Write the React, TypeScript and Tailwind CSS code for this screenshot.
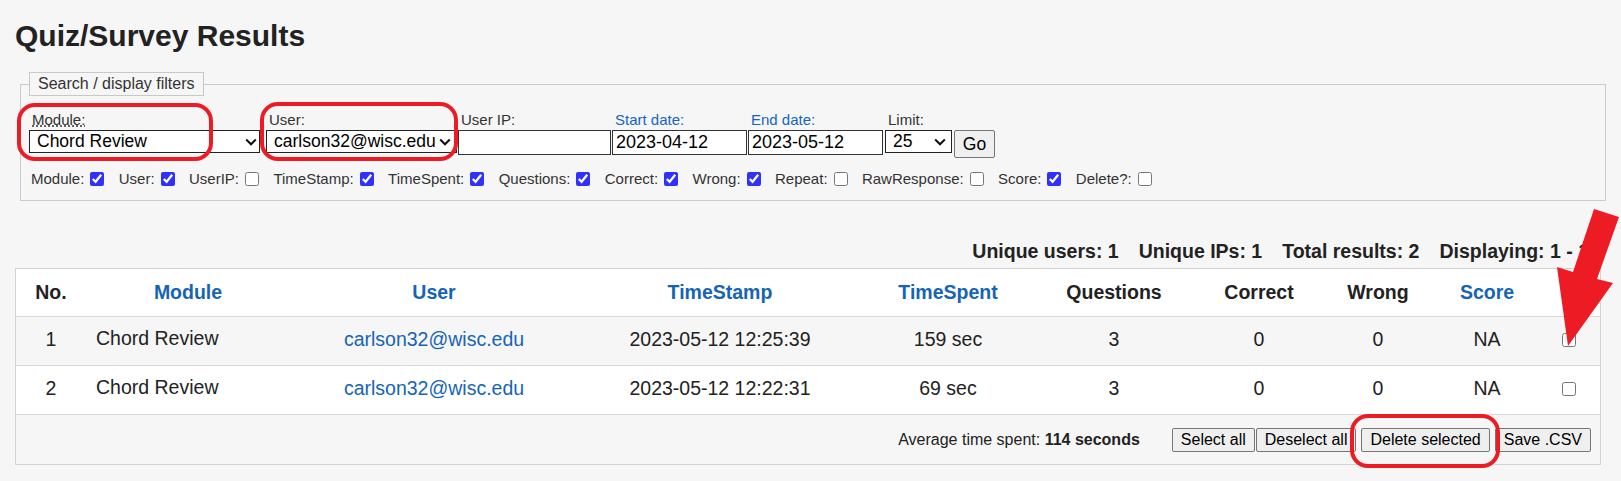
import React from "react";

const red = "#ed1c24";
const blue = "text-[#1565b4]";
const cols =
  "grid grid-cols-[70px_204px_288px_284px_172px_160px_130px_108px_110px_58px]";

const toggles: [string, boolean][] = [
  ["Module", true],
  ["User", true],
  ["UserIP", false],
  ["TimeStamp", true],
  ["TimeSpent", true],
  ["Questions", true],
  ["Correct", true],
  ["Wrong", true],
  ["Repeat", false],
  ["RawResponse", false],
  ["Score", true],
  ["Delete?", false],
];

const headers = [
  { label: "No.", link: false },
  { label: "Module", link: true },
  { label: "User", link: true },
  { label: "TimeStamp", link: true },
  { label: "TimeSpent", link: true },
  { label: "Questions", link: false },
  { label: "Correct", link: false },
  { label: "Wrong", link: false },
  { label: "Score", link: true },
  { label: "", link: false },
];

const results = [
  {
    no: 1,
    module: "Chord Review",
    user: "carlson32@wisc.edu",
    stamp: "2023-05-12 12:25:39",
    spent: "159 sec",
    questions: 3,
    correct: 0,
    wrong: 0,
    score: "NA",
  },
  {
    no: 2,
    module: "Chord Review",
    user: "carlson32@wisc.edu",
    stamp: "2023-05-12 12:22:31",
    spent: "69 sec",
    questions: 3,
    correct: 0,
    wrong: 0,
    score: "NA",
  },
];

function Chevron({ className }: { className: string }) {
  return (
    <svg
      className={`pointer-events-none absolute top-[8px] ${className}`}
      width="12"
      height="8"
      viewBox="0 0 12 8"
      fill="none"
    >
      <path d="M1.2 1.5l4.8 4.8 4.8-4.8" stroke="#111" strokeWidth="2" />
    </svg>
  );
}

function Select({
  value,
  width,
  chevron,
}: {
  value: string;
  width: string;
  chevron: string;
}) {
  return (
    <div className={`relative ${width}`}>
      <select
        defaultValue={value}
        className="h-[23px] w-full appearance-none border border-[#222] bg-white pl-[7px] text-[17.5px] leading-[21px] text-black outline-none"
      >
        <option>{value}</option>
      </select>
      <Chevron className={chevron} />
    </div>
  );
}

function Field({
  label,
  className,
  children,
}: {
  label: React.ReactNode;
  className: string;
  children: React.ReactNode;
}) {
  return (
    <div className={`flex flex-col ${className}`}>
      <div className="h-[17px] pl-[3px] text-[15px] leading-[17px] text-[#333]">
        {label}
      </div>
      <div className="mt-[2px]">{children}</div>
    </div>
  );
}

function Filters() {
  const input =
    "h-[25px] w-full border border-[#333] bg-white px-[3px] text-[18px] text-black outline-none";
  return (
    <fieldset className="ml-[5px] mt-[19px] border border-[#cbcbcb] px-[8px] pb-[11px] pt-[15px]">
      <legend className="border border-[#c8c8c8] px-[8px] text-[16px] leading-[22px] text-[#333]">
        Search / display filters
      </legend>

      <div className="flex items-start">
        <Field label={<abbr title="Quiz module">Module:</abbr>} className="w-[231px]">
          <Select value="Chord Review" width="w-[231px]" chevron="right-[3px]" />
        </Field>
        <Field label="User:" className="ml-[6px] w-[191px]">
          <Select value="carlson32@wisc.edu" width="w-[191px]" chevron="right-[6px]" />
        </Field>
        <Field label="User IP:" className="ml-[1px] w-[153px]">
          <input className={input} />
        </Field>
        <Field label={<span className="text-[#1565c0]">Start date:</span>} className="ml-[1px] w-[135px]">
          <input className={input} defaultValue="2023-04-12" />
        </Field>
        <Field label={<span className="text-[#1565c0]">End date:</span>} className="ml-[1px] w-[135px]">
          <input className={input} defaultValue="2023-05-12" />
        </Field>
        <Field label="Limit:" className="ml-[2px] w-[67px]">
          <Select value="25" width="w-[67px]" chevron="right-[6px]" />
        </Field>
        <button className="ml-[2px] mt-[19px] h-[28px] w-[41px] rounded-[2px] border border-[#767676] bg-[#efefef] text-[17.5px] text-black">
          Go
        </button>
      </div>

      <div className="mt-[11px] flex h-[20px] items-center gap-[14.4px] pl-[2px] text-[15px] text-[#333]">
        {toggles.map(([name, on]) => (
          <label key={name} className="flex items-center gap-[6px]">
            {name}:
            <input
              type="checkbox"
              defaultChecked={on}
              className="m-0 h-[14px] w-[14px] accent-[#3030ff]"
            />
          </label>
        ))}
      </div>
    </fieldset>
  );
}

function Stats() {
  return (
    <div className="mr-[5px] mt-[38px] flex h-[24px] items-center justify-end gap-[20px] pr-[12px] text-[19.5px] font-bold leading-[24px] text-[#222]">
      <span>Unique users: 1</span>
      <span>Unique IPs: 1</span>
      <span>Total results: 2</span>
      <span>Displaying: 1 - 1</span>
    </div>
  );
}

function ResultsTable() {
  const btn =
    "h-[24px] rounded-[2px] border border-[#767676] bg-[#efefef] px-[8px] text-[16px] leading-[22px] text-black";
  return (
    <div className="mr-[5px] mt-[5px] border border-[#d3d3d3] text-[19.5px]">
      <div className={`${cols} h-[48px] items-center border-b border-[#d9d9d9] bg-white font-bold`}>
        {headers.map((h, i) => (
          <div key={i} className={`text-center ${h.link ? blue : "text-[#222]"}`}>
            {h.label}
          </div>
        ))}
      </div>

      {results.map((r, i) => (
        <div
          key={r.no}
          className={`${cols} h-[49px] items-center border-b border-[#d9d9d9] pb-[2px] ${
            i === 0 ? "bg-[#f6f6f6]" : "bg-white"
          }`}
        >
          <div className="text-center">{r.no}</div>
          <div className="pb-[3px] pl-[10px]">{r.module}</div>
          <div className={`text-center ${blue}`}>{r.user}</div>
          <div className="text-center">{r.stamp}</div>
          <div className="text-center">{r.spent}</div>
          <div className="text-center">{r.questions}</div>
          <div className="text-center">{r.correct}</div>
          <div className="text-center">{r.wrong}</div>
          <div className="text-center">{r.score}</div>
          <div className="flex justify-center pr-[4px]">
            <input type="checkbox" className="m-0 h-[14px] w-[14px]" />
          </div>
        </div>
      ))}

      <div className="flex h-[49px] items-center justify-end bg-[#f6f6f6] pr-[9px] text-[16px]">
        <span className="mr-[32px]">
          Average time spent: <b>114 seconds</b>
        </span>
        <button className={btn}>Select all</button>
        <button className={`ml-px ${btn}`}>Deselect all</button>
        <button className={`ml-[5px] ${btn}`}>Delete selected</button>
        <button className={`ml-[5px] ${btn}`}>Save .CSV</button>
      </div>
    </div>
  );
}

function Annotations() {
  return (
    <svg
      className="pointer-events-none absolute left-0 top-0"
      width="1621"
      height="481"
      viewBox="0 0 1621 481"
      fill="none"
    >
      <rect x="19" y="105" width="192" height="54" rx="16" stroke={red} strokeWidth="4" />
      <rect x="262" y="104" width="194" height="55" rx="16" stroke={red} strokeWidth="4" />
      <rect x="1352" y="416" width="146" height="50" rx="16" stroke={red} strokeWidth="4" />
      <polygon
        points="1594,209 1619,217 1597,279 1613,283 1568,346 1557,267 1573,272"
        fill={red}
      />
    </svg>
  );
}

export default function App() {
  return (
    <div className="relative min-h-screen bg-[#f6f6f6] font-['Liberation_Sans',Arial,sans-serif] text-[#222]">
      <div className="px-[15px] pb-[8px]">
        <h1 className="pt-[19px] text-[30px] font-bold leading-[34px] text-[#222]">
          Quiz/Survey Results
        </h1>
        <Filters />
        <Stats />
        <ResultsTable />
      </div>
      <Annotations />
    </div>
  );
}
